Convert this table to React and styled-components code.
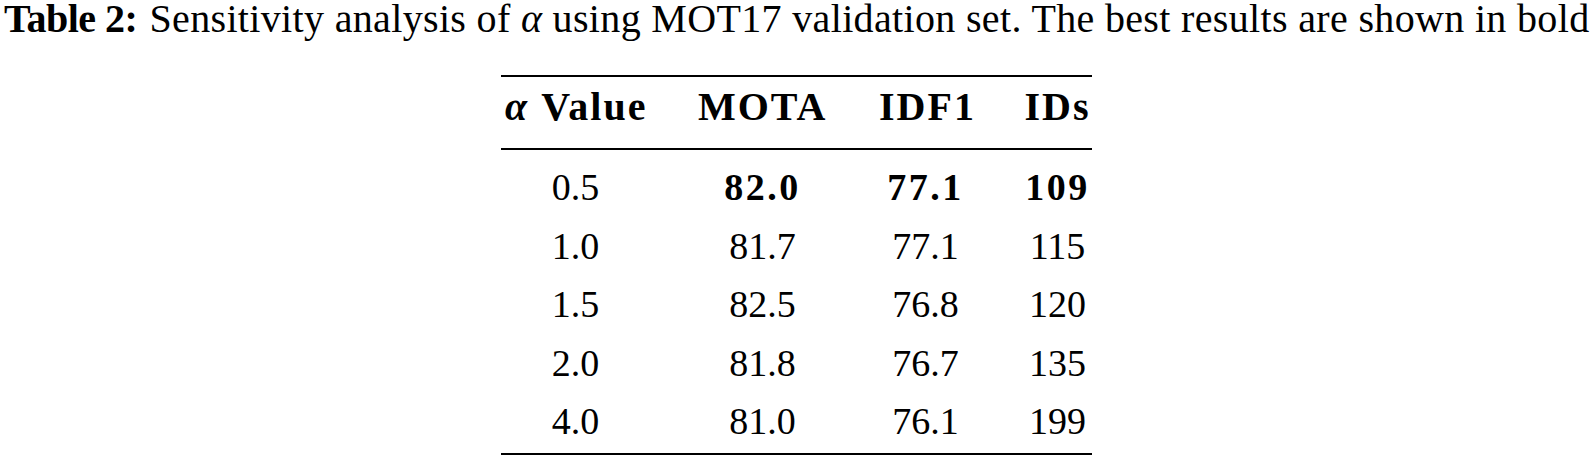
import React from 'react';
import styled, { createGlobalStyle } from 'styled-components';

const GlobalStyle = createGlobalStyle`
    html, body {
        margin: 0;
        padding: 0;
        background: #ffffff;
    }
    body {
        font-family: "Liberation Serif", "Times New Roman", serif;
        color: #000000;
    }
`;

const StyledPage = styled.div`
    width: 1593px;
    height: 457px;
`;

const StyledCaption = styled.div`
    padding-left: 4px;
    font-size: 40px;
    line-height: 37px;
    letter-spacing: 0.34px;
    white-space: nowrap;
`;

const CaptionLabel = styled.b`
    font-weight: 700;
    letter-spacing: -0.5px;
    margin-right: 12px;
`;

const Alpha = styled.i`
    font-style: italic;
    font-weight: ${(props) => (props.bold ? 700 : 400)};
`;

const StyledTable = styled.div`
    width: 591px;
    margin: 38px auto 0;
    border-top: 2px solid #000;
    border-bottom: 2px solid #000;
    padding: 1px 0 2.5px;
    font-size: 38px;
`;

const StyledHead = styled.div`
    padding-bottom: 12px;
    border-bottom: 2px solid #000;
    margin-bottom: 8px;
    font-size: 40px;
    font-weight: 700;
    letter-spacing: 2px;
`;

const StyledRow = styled.div`
    display: grid;
    grid-template-columns: 171px 181px 145px 94px;
    height: ${(props) => (props.head ? '58px' : '58.5px')};
    line-height: 58px;
`;

const StyledCell = styled.div`
    padding: 0 26px;
    text-align: center;
    white-space: nowrap;
    font-weight: ${(props) => (props.bold ? 700 : 'inherit')};
    letter-spacing: ${(props) => (props.bold ? '2.5px' : 'inherit')};

    &:first-child {
        padding-left: 4px;
    }
    &:last-child {
        padding-right: 1px;
    }
`;

const rows = [
    { alpha: '0.5', mota: '82.0', idf1: '77.1', ids: '109', best: true },
    { alpha: '1.0', mota: '81.7', idf1: '77.1', ids: '115' },
    { alpha: '1.5', mota: '82.5', idf1: '76.8', ids: '120' },
    { alpha: '2.0', mota: '81.8', idf1: '76.7', ids: '135' },
    { alpha: '4.0', mota: '81.0', idf1: '76.1', ids: '199' }
];

const App = () => (
    <StyledPage>
        <GlobalStyle />
        <StyledCaption>
            <CaptionLabel>Table 2:</CaptionLabel>
            Sensitivity analysis of <Alpha>α</Alpha> using MOT17 validation set. The best results are shown in bold
        </StyledCaption>

        <StyledTable>
            <StyledHead>
                <StyledRow head>
                    <StyledCell><Alpha bold>α</Alpha> Value</StyledCell>
                    <StyledCell>MOTA</StyledCell>
                    <StyledCell>IDF1</StyledCell>
                    <StyledCell>IDs</StyledCell>
                </StyledRow>
            </StyledHead>
            {rows.map((row) => (
                <StyledRow key={row.alpha}>
                    <StyledCell>{row.alpha}</StyledCell>
                    <StyledCell bold={row.best}>{row.mota}</StyledCell>
                    <StyledCell bold={row.best}>{row.idf1}</StyledCell>
                    <StyledCell bold={row.best}>{row.ids}</StyledCell>
                </StyledRow>
            ))}
        </StyledTable>
    </StyledPage>
);

export default App;
